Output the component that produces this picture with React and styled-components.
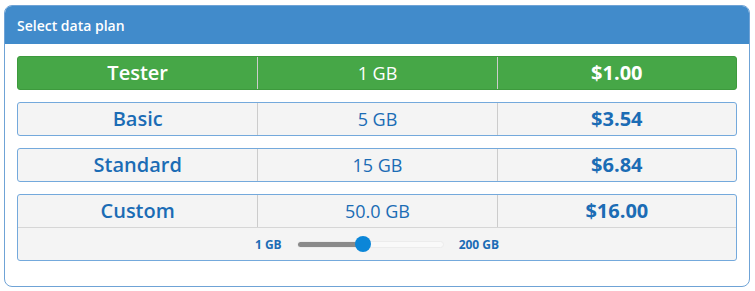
import React, { useState } from "react";
import styled, { createGlobalStyle } from "styled-components";

const GlobalStyle = createGlobalStyle`
  body {
    margin: 0;
    background: #ffffff;
    font-family: "Open Sans", "DejaVu Sans", sans-serif;
  }
`;

const Panel = styled.div`
  margin: 5px 5px 0 4px;
  border: 1px solid #6fa3d6;
  border-radius: 8px;
  overflow: hidden;
  background: #fff;
`;

const Header = styled.div`
  background: #418bcb;
  color: #fff;
  height: 38px;
  display: flex;
  align-items: center;
  padding-left: 12px;
  font-size: 14px;
  font-weight: 600;
`;

const Body = styled.div`
  padding: 12px 12px 25px 12px;
  display: flex;
  flex-direction: column;
  gap: 12px;
`;

const Plan = styled.div`
  border: 1px solid ${(p) => (p.$active ? "#3d9a3d" : "#74a9dc")};
  border-radius: 3px;
  background: ${(p) => (p.$active ? "#46a747" : "#f4f4f4")};
  color: ${(p) => (p.$active ? "#ffffff" : "#1b6cb5")};
  cursor: pointer;
`;

const Cells = styled.div`
  display: grid;
  grid-template-columns: 1fr 1fr 1fr;
  height: 32px;
`;

const Cell = styled.div`
  display: flex;
  align-items: center;
  justify-content: center;
  font-size: ${(p) => (p.$weight ? "20px" : "18px")};
  font-weight: ${(p) => p.$weight || 400};
  line-height: 1;
  & + & {
    border-left: 1px solid ${(p) => (p.$active ? "#3c953c" : "#cccccc")};
  }
`;

const SliderRow = styled.div`
  border-top: 1px solid #d6d6d6;
  height: 32px;
  display: flex;
  align-items: center;
  justify-content: center;
  gap: 15px;
`;

const Limit = styled.span`
  font-size: 12px;
  font-weight: 700;
  color: #1b6cb5;
`;

const Track = styled.div`
  position: relative;
  width: 147px;
  height: 7px;
  border-radius: 4px;
  background: #f9f9f9;
  border: 1px solid #ececec;
  box-sizing: border-box;
`;

const Fill = styled.div`
  height: 100%;
  border-radius: 4px 0 0 4px;
  background: #8a8a8a;
`;

const Thumb = styled.div`
  position: absolute;
  top: 50%;
  width: 16px;
  height: 16px;
  border-radius: 50%;
  background: #0b86d8;
  transform: translate(-50%, -50%);
`;

const plans = [
  { name: "Tester", size: "1 GB", price: "$1.00" },
  { name: "Basic", size: "5 GB", price: "$3.54" },
  { name: "Standard", size: "15 GB", price: "$6.84" },
  { name: "Custom", size: "50.0 GB", price: "$16.00", custom: true },
];

export default function App() {
  const [selected, setSelected] = useState("Tester");
  const pos = 45;

  return (
    <>
      <GlobalStyle />
      <Panel>
        <Header>Select data plan</Header>
        <Body>
          {plans.map((p) => {
            const active = p.name === selected;
            return (
              <Plan key={p.name} $active={active} onClick={() => setSelected(p.name)}>
                <Cells>
                  <Cell $weight={600} $active={active}>{p.name}</Cell>
                  <Cell $active={active}>{p.size}</Cell>
                  <Cell $weight={700} $active={active}>{p.price}</Cell>
                </Cells>
                {p.custom && (
                  <SliderRow>
                    <Limit>1 GB</Limit>
                    <Track>
                      <Fill style={{ width: `${pos}%` }} />
                      <Thumb style={{ left: `${pos}%` }} />
                    </Track>
                    <Limit>200 GB</Limit>
                  </SliderRow>
                )}
              </Plan>
            );
          })}
        </Body>
      </Panel>
    </>
  );
}
